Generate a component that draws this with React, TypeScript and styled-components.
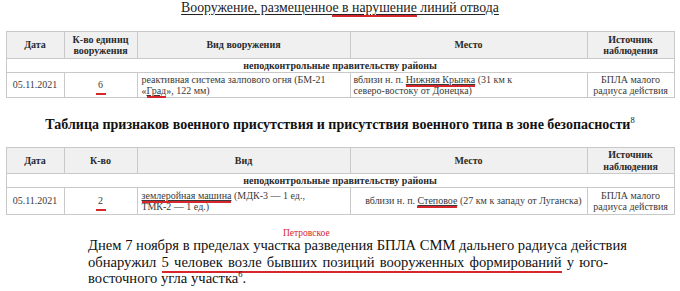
import React from 'react';
import styled, { createGlobalStyle } from 'styled-components';

const SERIF = `"Liberation Serif", Tinos, "Times New Roman", serif`;

const Global = createGlobalStyle`
  body {
    margin: 0;
    background: #fff;
    font-family: ${SERIF};
    color: #1a1a1a;
  }
`;

const Page = styled.div`
  width: 680px;
  height: 291px;
  overflow: hidden;
  display: flex;
  flex-direction: column;
  align-items: center;
  font-family: ${SERIF};
`;

const Title = styled.div`
  font-size: 13.8px;
  line-height: 16px;
  text-decoration: underline;
  text-underline-offset: 2px;
  color: #222;
`;

const RedMark = styled.span<{ $offset?: number }>`
  border-bottom: 2px solid #d7262c;
  padding-bottom: ${(p) => p.$offset ?? 1}px;
`;

const SubTitle = styled.div`
  margin-top: 18px;
  font-size: 14px;
  line-height: 17px;
  font-weight: bold;
  color: #111;
`;

const Sup = styled.sup`
  font-size: 8.5px;
  font-weight: normal;
  vertical-align: 6px;
  line-height: 0;
`;

const Table = styled.table<{ $top: number }>`
  margin-top: ${(p) => p.$top}px;
  width: 668px;
  border-collapse: collapse;
  table-layout: fixed;
  font-family: ${SERIF};
  font-size: 10px;
  line-height: 11.5px;
  color: #3a3a3a;
`;

const Th = styled.th<{ $h: number }>`
  background: #f0f0f0;
  border: 1px solid #c9c9c9;
  font-weight: bold;
  text-align: center;
  padding: 1px 1px;
  height: ${(p) => p.$h}px;
  color: #2a2a2a;
`;

const Section = styled.td`
  border: 1px solid #c9c9c9;
  text-align: center;
  font-weight: bold;
  padding: 0 2px;
  height: 13px;
  color: #2a2a2a;
`;

const Td = styled.td<{ $align?: 'left' | 'center' | 'right'; $h: number; $pad?: number }>`
  border: 1px solid #c9c9c9;
  text-align: ${(p) => p.$align ?? 'center'};
  padding: 0 ${(p) => p.$pad ?? 4}px;
  height: ${(p) => p.$h}px;
  vertical-align: middle;
`;

const Link = styled.span`
  text-decoration: underline;
  text-underline-offset: 1px;
  box-shadow: 0 2px 0 #d7262c;
`;

const Para = styled.div`
  position: relative;
  margin-top: 22px;
  margin-left: 16px;
  width: 520px;
  font-size: 14.6px;
  line-height: 16.5px;
  color: #111;
`;

const Line = styled.div<{ $justify?: boolean }>`
  text-align: ${(p) => (p.$justify ? 'justify' : 'left')};
  text-align-last: ${(p) => (p.$justify ? 'justify' : 'left')};
  white-space: nowrap;
`;

const Note = styled.span`
  position: absolute;
  left: 195px;
  top: -9px;
  font-size: 9.5px;
  line-height: 11px;
  color: #d7262c;
`;

const widths = [58, 73, 213, 237, 87];

const Cols = () => (
  <colgroup>
    {widths.map((w, i) => (
      <col key={i} style={{ width: w }} />
    ))}
  </colgroup>
);

const App = () => (
  <Page>
    <Global />
    <Title>
      Вооружение, размещенно<RedMark $offset={0}>е в нарушение</RedMark> линий отвода
    </Title>

    <Table $top={15}>
      <Cols />
      <thead>
        <tr>
          <Th $h={24}>Дата</Th>
          <Th $h={24}>
            К-во единиц
            <br />
            вооружения
          </Th>
          <Th $h={24}>Вид вооружения</Th>
          <Th $h={24}>Место</Th>
          <Th $h={24}>
            Источник
            <br />
            наблюдения
          </Th>
        </tr>
      </thead>
      <tbody>
        <tr>
          <Section colSpan={5}>неподконтрольные правительству районы</Section>
        </tr>
        <tr>
          <Td $h={24}>05.11.2021</Td>
          <Td $h={24}>
            <RedMark $offset={3}>&nbsp;6&nbsp;</RedMark>
          </Td>
          <Td $h={24} $align="left">
            реактивная система залпового огня (БМ-21
            <br />
            «<Link>Град</Link>», 122 мм)
          </Td>
          <Td $h={24} $align="left" $pad={3}>
            вблизи н. п. <Link>Нижняя Крынка</Link> (31 км к
            <br />
            северо-востоку от Донецка)
          </Td>
          <Td $h={24} $pad={1}>
            БПЛА малого
            <br />
            радиуса действия
          </Td>
        </tr>
      </tbody>
    </Table>

    <SubTitle>
      Таблица признаков военного присутствия и присутствия военного типа в зоне безопасности
      <Sup>8</Sup>
    </SubTitle>

    <Table $top={14}>
      <Cols />
      <thead>
        <tr>
          <Th $h={22}>Дата</Th>
          <Th $h={22}>К-во</Th>
          <Th $h={22}>Вид</Th>
          <Th $h={22}>Место</Th>
          <Th $h={22}>
            Источник
            <br />
            наблюдения
          </Th>
        </tr>
      </thead>
      <tbody>
        <tr>
          <Section colSpan={5}>неподконтрольные правительству районы</Section>
        </tr>
        <tr>
          <Td $h={26}>05.11.2021</Td>
          <Td $h={26}>
            <RedMark $offset={3}>&nbsp;2&nbsp;</RedMark>
          </Td>
          <Td $h={26} $align="left">
            <Link>землеройная машина</Link> (МДК-3 — 1 ед.,
            <br />
            ТМК-2 — 1 ед.)
          </Td>
          <Td $h={26} $align="right" $pad={5}>
            вблизи н. п. <Link>Степовое</Link> (27 км к западу от Луганска)
          </Td>
          <Td $h={26} $pad={1}>
            БПЛА малого
            <br />
            радиуса действия
          </Td>
        </tr>
      </tbody>
    </Table>

    <Para>
      <Note>Петровское</Note>
      <Line $justify>Днем 7 ноября в пределах участка разведения БПЛА СММ дальнего радиуса действия</Line>
      <Line $justify>
        обнаружил <RedMark $offset={1}>5 человек возле бывших позиций вооруженных формирований</RedMark> у юго-
      </Line>
      <Line>
        восточного угла участка<Sup>6</Sup>.
      </Line>
    </Para>
  </Page>
);

export default App;
